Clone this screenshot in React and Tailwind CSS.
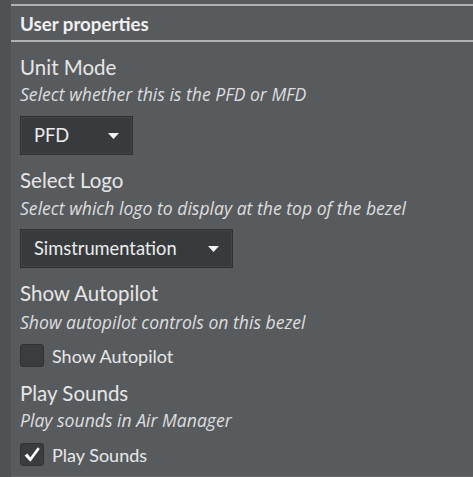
import React from "react";

const lato = { fontFamily: 'Lato, "Open Sans", sans-serif' };
const os = { fontFamily: '"Open Sans", "Noto Sans", sans-serif' };

function Arrow() {
  return (
    <svg width="11" height="6" viewBox="0 0 11 6" className="block">
      <path d="M0 0 L11 0 L5.5 6 Z" fill="#f2f2f2" />
    </svg>
  );
}

function Dropdown({ label, width }) {
  return (
    <div
      className={`flex items-center justify-between h-[39px] ${width} bg-[#383b3e] border border-[#2e3032] shadow-[inset_0_0_0_1px_#414447] pl-[13px] pr-[13px]`}
    >
      <span className="text-[18.3px] text-[#ececec] leading-none">{label}</span>
      <Arrow />
    </div>
  );
}

function Checkbox({ checked, label }) {
  return (
    <div className="flex items-center">
      <div className="w-[24px] h-[23px] rounded-[3px] bg-[#3a3d40] border border-[#2f3234] flex items-center justify-center">
        {checked && (
          <svg width="18" height="17" viewBox="0 0 17 16">
            <path d="M1.5 9 L4.2 7 L6.8 10.8 L14 1.2 L15.8 2.8 L7 14.8 Z" fill="#ffffff" />
          </svg>
        )}
      </div>
      <span className="ml-[8px] text-[18px] text-[#e8e8e8] leading-none">{label}</span>
    </div>
  );
}

function Heading({ children, mt }) {
  return <div className={`${mt} h-[22px] leading-[22px] text-[20.5px] text-[#e6e6e6]`}>{children}</div>;
}

function Desc({ children, mt }) {
  return (
    <div className={`${mt} h-[18px] leading-[18px] text-[17.6px] italic text-[#dedede]`} style={os}>
      {children}
    </div>
  );
}

export default function App() {
  return (
    <div className="w-[473px] h-[477px] bg-[#585b5e] flex overflow-hidden" style={lato}>
      <div className="w-[11px] h-full bg-[#4f5255] shrink-0" />
      <div className="flex-1 flex flex-col border-b border-[#64676a]">
        <div className="h-[2px] bg-[#aeb0b2] mt-[4px]" />
        <div className="h-[34px] flex items-center pl-[9px] pt-[3px]">
          <span className="text-[18.7px] font-bold text-[#f0f0f0] leading-none">User properties</span>
        </div>
        <div className="h-[2px] bg-[#aeb0b2]" />
        <div className="flex flex-col pl-[9px]">
          <Heading mt="mt-[14px]">Unit Mode</Heading>
          <Desc mt="mt-[7px]">Select whether this is the PFD or MFD</Desc>
          <div className="mt-[13px]"><Dropdown label="PFD" width="w-[113px]" /></div>
          <Heading mt="mt-[14px]">Select Logo</Heading>
          <Desc mt="mt-[8px]">Select which logo to display at the top of the bezel</Desc>
          <div className="mt-[12px]"><Dropdown label="Simstrumentation" width="w-[213px]" /></div>
          <Heading mt="mt-[14px]">Show Autopilot</Heading>
          <Desc mt="mt-[9px]">Show autopilot controls on this bezel</Desc>
          <div className="mt-[13px]"><Checkbox label="Show Autopilot" /></div>
          <Heading mt="mt-[15px]">Play Sounds</Heading>
          <Desc mt="mt-[7px]">Play sounds in Air Manager</Desc>
          <div className="mt-[14px]"><Checkbox checked label="Play Sounds" /></div>
        </div>
      </div>
    </div>
  );
}
